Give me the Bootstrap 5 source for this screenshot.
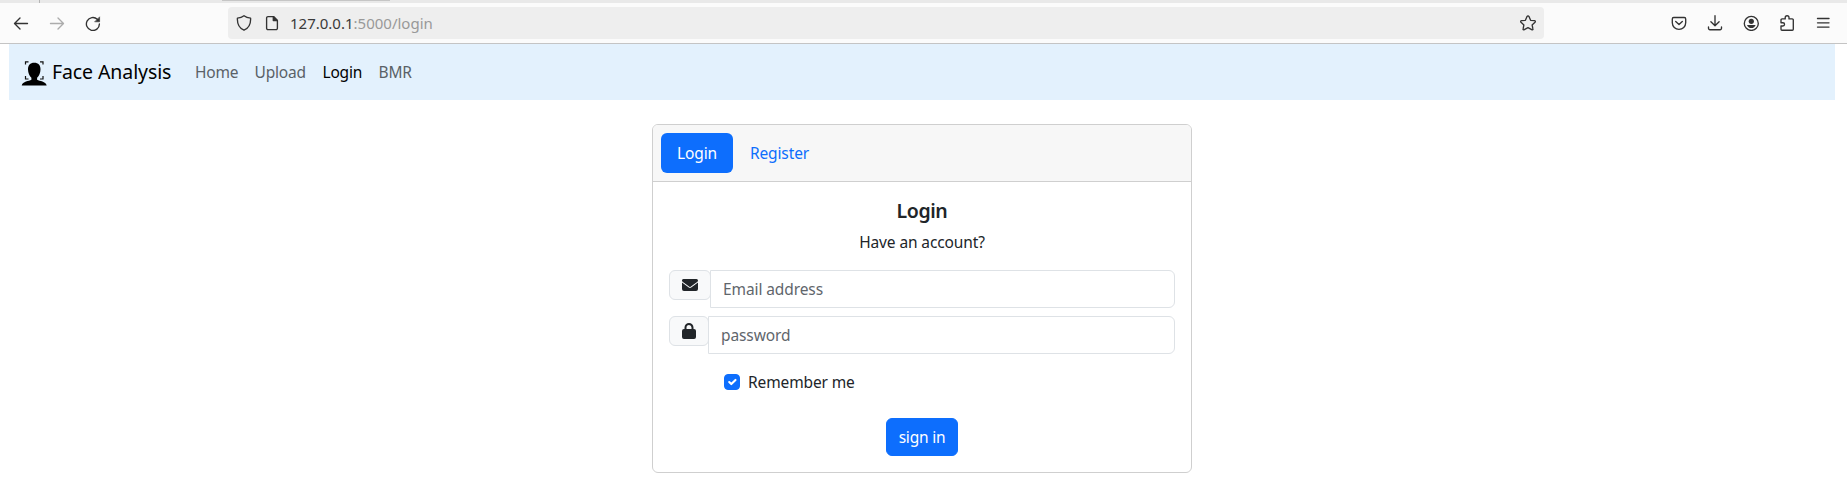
<!DOCTYPE html>
<html lang="en">
<head>
<meta charset="utf-8">
<title>Face Analysis</title>
<link href="https://cdn.jsdelivr.net/npm/bootstrap@5.3.0/dist/css/bootstrap.min.css" rel="stylesheet">
<style>
body{font-family:"Noto Sans","Open Sans",sans-serif;font-size:15.5px;line-height:24px;letter-spacing:-.12px;background:#fff;overflow:hidden}
.tabstrip{height:3px;background:#e9e9e9}
.tabstrip .sep{width:1px;height:3px;margin-left:39px;background:#b5b5b5}
.tabstrip .active-tab{width:168px;height:1px;margin-left:182px;background:#c6c6c6}
.toolbar{height:41px;background:#fbfbfb;border-bottom:1px solid #c4c4c4;color:#333}
.toolbar svg{display:block;flex:none;width:16px;height:16px;fill:none;stroke:currentColor;stroke-width:1.35;stroke-linecap:round;stroke-linejoin:round}
.nav-tools{width:228px;padding-left:13px;gap:20px}
.nav-tools .disabled-tool{color:#acacac}
.urlbar{width:1316px;height:32px;background:#eee;border-radius:4px;padding:0 8px;gap:12px}
.url{font-size:15px;letter-spacing:0;color:#3a3a3a;margin-left:-2px}
.url span{color:#999}
.right-tools{margin-left:127px;gap:20px}
.site-nav{margin:0 12px 0 9px;height:56px;background:#e3f1fd;padding-left:12px}
.brand-name{font-size:19.5px;letter-spacing:-.1px;color:#000;margin-left:5px;width:135px}
.site-nav .brand-icon{position:relative;top:1px}
.site-nav .nav-link{padding:8px 0 8px 8px;color:#5a6167;letter-spacing:-.2px}
.site-nav .nav-link.active{color:#000}
.w-home{width:59.5px}.w-upload{width:68px}.w-login{width:56px}
.login-card{width:540px;height:349px;margin:24px 0 0 652px;border-color:#cfcfcf}
.login-card .card-header{height:57px;padding:8px;background:#f7f7f7;border-color:#cfcfcf}
.card-header .nav-link{height:40px;padding:8px 0;text-align:center}
.card-header .nav-link.active{width:72px;background:#0d6efd}
.card-header .reg{width:93px;color:#0d6efd}
.icon-box{height:30px;background:#f8f9fa;border:1px solid #dee2e6;border-radius:6px}
.mail-box{width:42px}.lock-box{width:40px}
.login-card .form-control{height:38px;font-size:15.5px;letter-spacing:-.1px;border-color:#dee2e6;border-radius:0 6px 6px 0;margin-left:-1px}
.form-control::placeholder{color:#5f666c}
.login-card .form-check-input{width:16px;height:16px;margin:0 8px 0 55px;border-radius:4px}
.login-title{font-size:19.5px;line-height:24px;font-weight:600;letter-spacing:-.4px;padding-top:1px;margin-bottom:7px}
.sign{width:72px;height:38px;font-size:15.5px;line-height:24px;padding:6px 0;letter-spacing:-.2px;background:#0d6efd}
</style>
</head>
<body>
<div class="tabstrip d-flex"><div class="sep"></div><div class="active-tab"></div></div>
<header class="toolbar d-flex align-items-center">
  <div class="nav-tools d-flex flex-shrink-0">
    <svg viewBox="0 0 16 16"><path d="M14.5 8.5H1.7M7 3 1.5 8.5 7 14"/></svg>
    <svg class="disabled-tool" viewBox="0 0 16 16"><path d="M1.5 8.5h12.8M9 3l5.5 5.5L9 14"/></svg>
    <svg viewBox="0 0 16 16"><path d="M12.3 4.2A6.5 6.5 0 1 0 14.4 9"/><path d="M14.6 2.2v4.6H10z" fill="currentColor" stroke-width=".6"/></svg>
  </div>
  <div class="urlbar d-flex align-items-center flex-shrink-0">
    <svg viewBox="0 0 16 16"><path d="M8 .8C6 2.4 3.8 3 1.4 3.2 1.1 9 3.2 13.2 8 15.2 12.8 13.2 14.900 9 14.6 3.2 12.2 3 10 2.4 8 .8z"/></svg>
    <svg viewBox="0 0 16 16"><path d="M9.5 1.6H4A1.4 1.4 0 0 0 2.6 3v10.2a1.4 1.4 0 0 0 1.4 1.4h8a1.4 1.4 0 0 0 1.4-1.4V5.5z"/><path d="M9.3 1.6v4h4z" fill="currentColor"/></svg>
    <div class="url">127.0.0.1<span>:5000/login</span></div>
    <svg class="ms-auto" viewBox="0 0 16 16"><path d="M8 .9c.5 0 .8.3 1 .7l1.6 3.7 3.900.4c.8.1 1.100.9.5 1.5l-2.900 2.7.8 4c.2.8-.5 1.2-1.2.8L8 12.7l-3.7 2c-.7.4-1.4 0-1.2-.8l.8-4L1 7.2c-.6-.6-.3-1.4.5-1.5l3.900-.4L7 1.600c.2-.4.5-.7 1-.7z"/></svg>
  </div>
  <div class="right-tools d-flex">
    <svg viewBox="0 0 16 16"><path d="M2.7 2.5h10.600a1.4 1.4 0 0 1 1.4 1.4v3.900a6.7 6.5 0 0 1-13.4 0V3.900a1.4 1.4 0 0 1 1.4-1.4zM4.7 6.5 8 9.6l3.3-3.1"/></svg>
    <svg viewBox="0 0 16 16"><path d="M8 .7v9.8M3.9 6.7 8 10.7l4.1-4M1.5 12v1.3a1.4 1.4 0 0 0 1.4 1.4h10.2a1.4 1.4 0 0 0 1.4-1.4V12"/></svg>
    <svg viewBox="0 0 16 16"><circle cx="8.3" cy="8.4" r="7"/><circle cx="8.3" cy="6.3" r="2.6" fill="currentColor" stroke="none"/><path d="M4 10h8.600c-.6 2.100-2.300 3.100-4.300 3.100S4.600 12.100 4 10z" fill="currentColor" stroke="none"/></svg>
    <svg viewBox="0 0 16 16"><path d="M6.200 3.900V2.600a1.900 1.900 0 0 1 3.800 0v1.300h3.300a1 1 0 0 1 1 1v9.300a1 1 0 0 1-1 1H3a1 1 0 0 1-1-1v-3.200h1.900a1.600 1.600 0 0 0 0-3.300H2V4.900a1 1 0 0 1 1-1z"/></svg>
    <svg viewBox="0 0 16 16"><path d="M2.500 3.500h11.500M2.500 7.800h11.500M2.500 12.100h11.500"/></svg>
  </div>
</header>

<nav class="site-nav d-flex align-items-center">
  <svg class="brand-icon flex-shrink-0" width="26" height="25" viewBox="0 0 26 25"><path d="M4.500 3.500V.8h3M19 .8h3v2.700M4.500 15v3h3M19 18h3v-3" fill="none" stroke="#111" stroke-width="1.2"/><path d="M13.200 1.800c4.200 0 6.400 2.700 6.300 6.700-.1 3.500-1.400 6.600-3.400 8.300v2c2.500 1.600 8.600 1.300 9.600 5.700H.7c1-4.400 7.200-4.100 9.700-5.700v-2c-2-1.700-3.300-4.800-3.400-8.300-.1-4 2.200-6.700 6.200-6.700z"/></svg>
  <div class="brand-name">Face Analysis</div>
  <a class="nav-link w-home">Home</a><a class="nav-link w-upload">Upload</a><a class="nav-link active w-login">Login</a><a class="nav-link">BMR</a>
</nav>

<main class="card login-card">
  <div class="card-header"><div class="nav nav-pills"><a class="nav-link active">Login</a><a class="nav-link reg">Register</a></div></div>
  <div class="card-body p-3">
    <h5 class="login-title text-center">Login</h5>
    <p class="text-center mb-3">Have an account?</p>
    <div class="d-flex align-items-start mb-2">
      <div class="icon-box mail-box d-flex flex-shrink-0 align-items-center justify-content-center"><svg width="16" height="16" viewBox="0 0 16 16" fill="#212529"><path d="M1.500 2h13A1.500 1.500 0 0 1 16 3.500c0 .5-.2.900-.6 1.200l-6.800 5.100a1 1 0 0 1-1.200 0L.6 4.700A1.500 1.500 0 0 1 1.500 2zM0 5.500l6.800 5.100a2 2 0 0 0 2.400 0L16 5.500V12a2 2 0 0 1-2 2H2a2 2 0 0 1-2-2z"/></svg></div>
      <input class="form-control" type="text" placeholder="Email address">
    </div>
    <div class="d-flex align-items-start">
      <div class="icon-box lock-box d-flex flex-shrink-0 align-items-center justify-content-center"><svg width="14" height="16" viewBox="0 0 14 16" fill="#212529"><path d="M4.500 4.500V6h5V4.500a2.500 2.500 0 0 0-5 0zM2.500 6V4.500a4.500 4.500 0 0 1 9 0V6h.5a2 2 0 0 1 2 2v6a2 2 0 0 1-2 2H2a2 2 0 0 1-2-2V8a2 2 0 0 1 2-2z"/></svg></div>
      <input class="form-control" type="text" placeholder="password">
    </div>
    <div class="d-flex align-items-center mt-3"><input class="form-check-input" type="checkbox" id="remember" checked><label for="remember">Remember me</label></div>
    <div class="text-center mt-4"><button class="btn btn-primary sign" type="button">sign in</button></div>
  </div>
</main>
<script src="https://cdn.jsdelivr.net/npm/bootstrap@5.3.0/dist/js/bootstrap.bundle.min.js"></script>
</body>
</html>
